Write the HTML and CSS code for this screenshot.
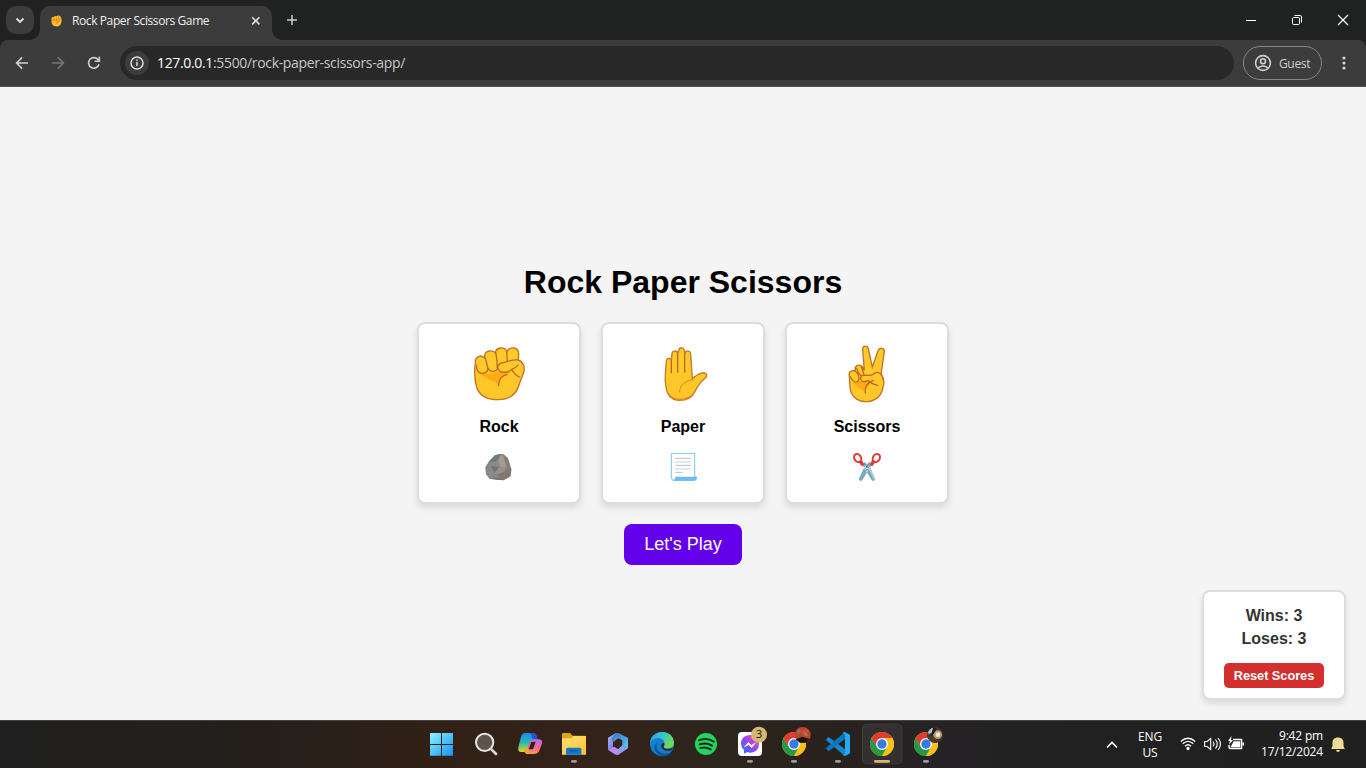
FILE: index.html
```html
<!DOCTYPE html>
<html lang="en">
<head>
<meta charset="utf-8">
<title>Rock Paper Scissors Game</title>
<link rel="stylesheet" href="styles.css">
</head>
<body>
<svg class="defs" width="0" height="0">
  <defs>
    <linearGradient id="skin" x1="0" y1="0" x2="0" y2="1"><stop offset="0" stop-color="#ffc92c"/><stop offset="1" stop-color="#ffc629"/></linearGradient>
    <linearGradient id="win" x1="0" y1="0" x2="1" y2="1"><stop offset="0" stop-color="#8df0ff"/><stop offset="1" stop-color="#1594f5"/></linearGradient>
    <linearGradient id="copA" x1="0" y1="0" x2="0" y2="1"><stop offset="0" stop-color="#128fe8"/><stop offset=".5" stop-color="#28b6b5"/><stop offset="1" stop-color="#e4d51f"/></linearGradient>
    <linearGradient id="copB" x1="0" y1="0" x2="0" y2="1"><stop offset="0" stop-color="#b66af5"/><stop offset=".5" stop-color="#f0629b"/><stop offset="1" stop-color="#ff9b42"/></linearGradient>
    <linearGradient id="fold" x1="0" y1="0" x2="1" y2="1"><stop offset="0" stop-color="#ffe07c"/><stop offset="1" stop-color="#ffc22c"/></linearGradient>
    <linearGradient id="edgeTop" x1="0" y1="0" x2="1" y2=".4"><stop offset="0" stop-color="#2a9fe0"/><stop offset=".5" stop-color="#31c5d1"/><stop offset="1" stop-color="#6edb55"/></linearGradient>
    <linearGradient id="edgeLow" x1="0" y1="0" x2="1" y2="1"><stop offset="0" stop-color="#1386d8"/><stop offset="1" stop-color="#1474cb"/></linearGradient>
    <linearGradient id="mess" x1="0" y1="1" x2="1" y2="0"><stop offset="0" stop-color="#0a83ff"/><stop offset=".5" stop-color="#9b42fb"/><stop offset="1" stop-color="#ff5d83"/></linearGradient>
    <linearGradient id="m365" x1="0" y1="0" x2="1" y2="1"><stop offset="0" stop-color="#a9baf8"/><stop offset="1" stop-color="#6050c8"/></linearGradient>
    <linearGradient id="m365b" x1="0" y1="0" x2="1" y2="1"><stop offset="0" stop-color="#2e6fc5"/><stop offset="1" stop-color="#62c9f5"/></linearGradient>
    <linearGradient id="stone" x1="0" y1="0" x2="1" y2="1"><stop offset="0" stop-color="#74828a"/><stop offset=".5" stop-color="#918b88"/><stop offset="1" stop-color="#746e6d"/></linearGradient>
    <symbol id="fist" viewBox="40 36 158 162">
      <path d="M46 84C44 73 52 64 62 63C67 64 71 66 75 69C72 58 77 50 87 48C96 47 102 49 107 54C106 44 113 40 122 39C131 38 138 42 140 50C143 42 153 37 163 39C173 41 176 47 176 57L175 75C187 79 195 92 192 107C190 119 184 130 179 144C171 177 149 194 115 194C80 195 55 180 49 153C42 126 43 106 46 84Z" fill="url(#skin)" stroke="#c47322" stroke-width="4"/>
      <path d="M57 112C76 121 96 117 112 109L143 112L158 109L141 120C126 124 119 133 116 151C102 135 74 134 57 112Z" fill="#ffac12"/>
      <path d="M49 90C50 107 56 116 67 115C78 115 85 108 83 98C81 84 79 77 75 69M83 98C88 111 106 113 112 102C112 84 110 66 107 53M140 50L142 79M175 75C160 72 145 79 129 83C113 86 110 98 118 107C129 116 146 112 155 103C161 113 171 124 179 126M155 103C162 101 169 97 174 90M116 152C115 134 126 121 141 119" fill="none" stroke="#bd6820" stroke-width="3.800" stroke-linecap="round" stroke-linejoin="round"/>
    </symbol>
    <symbol id="chrome" viewBox="0 0 72 72">
      <circle cx="36" cy="36" r="36" fill="#fbc116"/>
      <path d="M36 18H67.2A36 36 0 0 0 4.8 18L20 45Z" fill="#e33b2e"/>
      <path d="M4.800 18A36 36 0 0 0 36 72L52 45L20 45Z" fill="#279847"/>
      <path d="M36 72A36 36 0 0 0 67.200 18H36L52 45Z" fill="#fbc116"/>
      <circle cx="36" cy="36" r="18" fill="#fff"/><circle cx="36" cy="36" r="14" fill="#327be8"/>
    </symbol>
  </defs>
</svg>

<header class="browser">
  <div class="tabs">
    <div class="tab-search"><svg width="28" height="28" viewBox="0 0 28 28"><path d="M10.500 12.500l3.500 3.400 3.500-3.400" fill="none" stroke="#e4e6e5" stroke-width="1.800"/></svg></div>
    <div class="tab">
      <svg class="favicon" width="11" height="12" viewBox="0 0 11 12"><path d="M.5 3Q1 1.500 3 2Q3.500.5 5.500 1Q8-.2 9.500 1.500Q11 4 10.500 6.500Q10 11.500 5.500 11.500Q.8 11.200.5 7Z" fill="#ffbd26"/><path d="M.8 3V5.500Q2.500 6.500 3 5V2.500M3 5Q4.500 6.500 5.500 5V1.500M7.500 1V3.500M10 4Q6 3 6 5.500Q8 7 9 5.500M5.500 9Q5 7 8 6.500" fill="none" stroke="#c17818" stroke-width=".65"/></svg>
      <span class="tab-title">Rock Paper Scissors Game</span>
      <svg class="tab-close" width="10" height="10" viewBox="0 0 10 10"><path d="M1.200 1.200l7.200 7.200M8.400 1.200L1.200 8.400" stroke="#e7e7e7" stroke-width="1.500"/></svg>
    </div>
    <svg class="new-tab" width="12" height="12" viewBox="0 0 12 12"><path d="M6 1v10M1 6h10" stroke="#cdd0ce" stroke-width="1.500"/></svg>
    <svg class="window-buttons" width="120" height="40" viewBox="0 0 120 40" fill="none" stroke="#fff" stroke-width="1"><path d="M0 20.500h10"/><rect x="46.500" y="17.500" width="7" height="7" rx="1.200"/><path d="M48.500 15.500h5.500q1.500 0 1.500 1.500v5.500"/><path d="M92 15l10 10M102 15L92 25" stroke-width="1.200"/></svg>
  </div>
  <div class="toolbar">
    <svg class="nav-icons" width="120" height="46" viewBox="0 0 120 46" fill="none" stroke-width="1.600"><path d="M28 23H17M22.200 17.400L16.600 23l5.600 5.600" stroke="#d1d1d1"/><path d="M52 23h11M57.800 17.400L63.400 23l-5.600 5.600" stroke="#777"/><path d="M98.300 20A5.300 5.300 0 1 0 99 24.200M99.300 16.800v4.400h-4.700" stroke="#d1d1d1"/></svg>
    <div class="address">
      <span class="site-info"><svg width="24" height="24" viewBox="0 0 24 24" fill="none" stroke="#dedede" stroke-width="1.500"><circle cx="12" cy="12" r="6"/><path d="M12 11v4M12 8.500v1.400"/></svg></span>
      <span class="url"><b>127.0.0.1</b>:5500/rock-paper-scissors-app/</span>
    </div>
    <div class="guest"><svg width="18" height="18" viewBox="0 0 18 18" fill="none" stroke="#cfcfcf" stroke-width="1.600"><circle cx="9" cy="9" r="7.400"/><circle cx="9" cy="7.200" r="2.500"/><path d="M4 14q5-4 10 0"/></svg><span>Guest</span></div>
    <svg class="more" width="6" height="18" viewBox="0 0 6 18" fill="#d0d0d0"><circle cx="3" cy="4" r="1.600"/><circle cx="3" cy="9" r="1.600"/><circle cx="3" cy="14" r="1.600"/></svg>
  </div>
</header>

<main class="game">
  <h1>Rock Paper Scissors</h1>
  <section class="cards">
    <article class="card">
      <svg class="hand" viewBox="-3 0 240 225"><use href="#fist" x="40" y="36" width="158" height="162"/></svg>
      <h2>Rock</h2>
      <svg class="object" viewBox="-3 0 180 120"><path d="M46 67L56 50L75 31L88 27L100 27L113 39L118 52L124 73L122 94L100 106L58 101L48 88Z" fill="url(#stone)"/><path d="M56 50L75 31L90 27L84 44L76 50Z" fill="#6c7a81"/><path d="M84 44L98 27L112 39L119 57L106 67L91 65Z" fill="#a39a94"/><path d="M98 27L113 39L120 70L108 60Z" fill="#827d7a"/><path d="M63 63L88 66L73 85Z" fill="#6f767a"/><path d="M88 66L107 67L102 81L83 88L73 85Z" fill="#9a908b"/><path d="M83 88L104 81L124 73L120 94L100 106Z" fill="#83766f"/><path d="M58 101L80 101L100 106Z" fill="#41586a"/></svg>
    </article>
    <article class="card">
      <svg class="hand" viewBox="-6 0 240 225"><path d="M61 117L64 78C65 68 77 67 79 77L81 56C82 46 97 45 98 56L101 47C103 35 116 36 118 47L120 55C122 44 136 46 137 57L142 130C153 124 160 115 171 114C181 111 190 119 182 128C169 138 158 153 150 169C140 190 122 197 99 196C77 193 66 181 63 157C60 140 60 130 61 117Z" fill="url(#skin)" stroke="#c87922" stroke-width="4"/><path d="M79 77V113M98 57V111M119 55V111" fill="none" stroke="#bd6820" stroke-width="4" stroke-linecap="round"/><path d="M66 165C78 196 118 198 138 180C117 211 73 195 66 165" fill="#e28f18"/><path d="M104 171C104 151 121 138 144 134" fill="none" stroke="#e09118" stroke-width="3.500" stroke-linecap="round"/></svg>
      <h2>Paper</h2>
      <svg class="object" viewBox="-6 0 180 120"><path d="M49 25H119V96H125Q125 106 117 106H56Q49 105 49 97Z" fill="#fff" stroke="#64b7ee" stroke-width="2.500"/><path d="M62 95H126Q125 107 117 107H53Q60 105 62 95Z" fill="#6cbdf1"/><path d="M60 40H108M60 61H108M60 82H83" stroke="#b5c3ca" stroke-width="3"/><path d="M60 51H108M60 72H108" stroke="#dbe1e5" stroke-width="5"/></svg>
    </article>
    <article class="card">
      <svg class="hand" viewBox="-9 0 240 225"><path d="M102 94L98 43C97 31 113 30 115 42L127 96L144 47C149 35 164 39 163 50L153 119C164 131 163 145 159 157C154 185 134 201 105 200C80 199 61 181 60 155L58 123C55 111 64 104 75 108L76 105C73 93 85 86 96 94L103 107Z" fill="url(#skin)" stroke="#c47322" stroke-width="4"/><path d="M70 141L96 138L116 139L139 134C120 143 108 154 106 173C96 160 78 159 70 141Z" fill="#ffac12"/><path d="M75 108C84 112 91 131 84 139C75 147 65 134 61 125M80 100C85 119 96 128 102 118L94 95M96 121C88 130 93 142 104 140C110 139 112 137 116 137C122 146 134 149 143 151M103 121C110 120 121 125 132 116C143 107 158 115 159 134M106 174C103 160 110 143 129 137" fill="none" stroke="#bd6820" stroke-width="3.800" stroke-linecap="round"/></svg>
      <h2>Scissors</h2>
      <svg class="object" viewBox="-12 0 180 120"><g transform="translate(-558 0)"><path d="M619 55L630 52L645 68L661 103L655 109L650 105ZM653 55L642 52L627 68L611 103L616 109L622 105Z" fill="#7ba9b8"/><path d="M640 69L657 105L661 103L648 70Z" fill="#acd2df"/><path d="M619 52L637 60L631 71L644 80M653 52L637 60L642 71L628 80" fill="none" stroke="#6e9cad" stroke-width="3"/><circle cx="636" cy="66" r="3" fill="#486e7e"/><g fill="#fff" stroke="#e3392f" stroke-width="6"><ellipse cx="608" cy="39" rx="10" ry="13" transform="rotate(-32 608 39)"/><ellipse cx="664" cy="39" rx="10" ry="13" transform="rotate(32 664 39)"/></g><path d="M613 54L621 45L627 60L620 64ZM659 54L651 45L645 60L652 64Z" fill="#e3392f"/></g></svg>
    </article>
  </section>
  <button class="play">Let's Play</button>
  <aside class="scores"><p>Wins: 3</p><p>Loses: 3</p><button>Reset Scores</button></aside>
</main>

<footer class="taskbar">
  <nav class="apps">
    <svg viewBox="0 0 132 144"><path d="M33 39H66V72H33ZM69 39H102V72H69ZM33 75H66V107H33ZM69 75H102V107H69Z" fill="url(#win)"/></svg>
    <svg viewBox="0 0 132 144"><circle cx="65" cy="67" r="26" fill="#5e544b" stroke="#e5e4e3" stroke-width="6"/><path d="M83 86L99 102" stroke="#d8d8d8" stroke-width="8" stroke-linecap="round"/></svg>
    <svg viewBox="0 0 132 144"><path d="M54 39H79Q86 39 89 50L92 59H78Q71 59 68 69L61 91Q59 96 53 96H43Q31 96 34 82L42 51Q45 39 54 39Z" fill="url(#copA)"/><path d="M68 39H79Q87 39 92 58H77L72 42Z" fill="#2353d7"/><path d="M78 58H94Q108 58 105 71L96 94Q92 102 83 102H61Q55 102 51 93L49 90Q58 92 61 84L68 66Q71 58 78 58Z" fill="url(#copB)"/><path d="M73 66L65 88H78L86 65Z" fill="#2d231b"/><path d="M49 89Q58 92 61 84L64 76Q62 96 70 102H61Q54 101 49 89Z" fill="#f1a638"/></svg>
    <svg viewBox="0 0 132 144"><path d="M33 43Q33 39 37 39H57L65 47H100Q105 47 105 52V103H33Z" fill="#e2a50e"/><path d="M33 55H61L67 48H105V104H33Z" fill="url(#fold)"/><path d="M45 104V88Q45 83 50 83H86Q91 83 91 88V104Z" fill="#1179cb"/><path d="M55 92H81" stroke="#075b9e" stroke-width="4"/><rect class="active-mark" x="60" y="120" width="18" height="8" rx="4"/></svg>
    <svg viewBox="0 0 132 144"><path d="M63 39L39 53V89L54 98V66L79 47Z" fill="url(#m365)"/><path d="M63 39H71L99 54V85L82 76V61L63 52L54 66L48 57Z" fill="url(#m365b)"/><path d="M40 90L58 80L70 88L82 76L99 85L69 105Q63 106 58 102Z" fill="#bd8bea"/><path d="M70 88L82 76L97 84L73 99Z" fill="#80a1ee"/></svg>
    <svg viewBox="0 0 132 144"><circle cx="69" cy="72" r="36" fill="url(#edgeLow)"/><path d="M33 71C34 48 51 36 70 36C93 36 106 53 105 70C103 86 86 89 76 83C69 79 77 76 76 68C74 56 58 51 46 56C39 59 35 64 33 71Z" fill="url(#edgeTop)"/><path d="M57 67C48 77 53 94 69 99C80 103 91 101 98 96C88 111 65 110 56 101C43 91 43 73 57 67Z" fill="#0753a3"/><path d="M75 78Q72 81 75 84Q86 91 102 83L98 90Q86 95 75 90Q66 85 66 76Q67 70 75 68Q78 73 75 78Z" fill="#31251b"/></svg>
    <svg viewBox="0 0 132 144"><circle cx="69" cy="72" r="33" fill="#1ed760"/><path d="M48 61Q72 52 92 65M50 73Q71 66 87 77M52 84Q69 79 83 88" fill="none" stroke="#14291b" stroke-width="6" stroke-linecap="round"/></svg>
    <svg viewBox="0 0 132 144"><rect x="33" y="36" width="72" height="72" rx="12" fill="#fff"/><path d="M69 45C52 45 42 56 42 71Q42 82 51 91V101L61 96Q65 98 69 98C86 98 96 87 96 71S86 45 69 45Z" fill="url(#mess)"/><path d="M53 80L64 67L73 76L85 69L74 83L65 74Z" fill="#fff" stroke="#fff" stroke-width="2"/><circle cx="96" cy="44" r="24" fill="#d6b875"/><text x="96" y="55" class="badge-number">3</text><rect class="active-mark" x="60" y="120" width="18" height="8" rx="4"/></svg>
    <svg viewBox="0 0 132 144"><use href="#chrome" x="33" y="36" width="72" height="72"/><circle cx="95" cy="45" r="24" fill="#b8442f"/><path d="M75 37L85 24L92 34L105 24L114 38L102 45L88 37Z" fill="#d94532"/><path d="M75 58L94 50L115 57L104 68L87 68Z" fill="#17130f"/><path d="M78 34L89 28L84 46Z" fill="#788253"/><path d="M101 34L112 48L98 45Z" fill="#8b8f5b"/><rect class="active-mark" x="60" y="120" width="18" height="8" rx="4"/></svg>
    <svg viewBox="0 0 132 144"><path d="M35 56L41 51L90 88V107L83 103L34 61Q32 59 35 56Z" fill="#1686cf"/><path d="M35 88L41 94L90 57V36L83 42L34 83Q32 86 35 88Z" fill="#0878bd"/><path d="M86 36Q90 35 93 38L105 44V100L92 107Q87 109 84 104Q90 105 90 99V45Q90 39 83 42Z" fill="#27a9f2"/><rect class="active-mark" x="60" y="120" width="18" height="8" rx="4"/></svg>
    <svg viewBox="0 0 132 144"><rect x="10.500" y="12.500" width="118" height="119" rx="12" fill="#343030" stroke="#403c3b" stroke-width="3"/><use href="#chrome" x="33" y="36" width="72" height="72"/><rect x="45" y="120" width="48" height="8" rx="4" fill="#d5b773"/></svg>
    <svg viewBox="0 0 132 144"><use href="#chrome" x="33" y="36" width="72" height="72"/><circle cx="96" cy="45" r="24" fill="#4b3628"/><path d="M75 37Q80 25 91 23L88 37L77 43Z" fill="#a9c7d9"/><circle cx="104" cy="44" r="13" fill="#b49b78"/><circle cx="105" cy="44" r="7" fill="#efe5d3"/><path d="M91 22L101 25L94 39L83 49Z" fill="#211b1b"/><rect class="active-mark" x="60" y="120" width="18" height="8" rx="4"/></svg>
  </nav>
  <div class="tray">
    <svg class="tray-arrow" width="12" height="8" viewBox="0 0 12 8"><path d="M1 6.500l5-5 5 5" fill="none" stroke="#fff" stroke-width="1.600"/></svg>
    <div class="language">ENG<br>US</div>
    <svg class="status" width="66" height="18" viewBox="0 0 66 18" fill="none" stroke="#fff" stroke-width="1.300"><path d="M.8 6.500q7.200-6.500 14.400 0M2.800 8.800q5.200-4.800 10.400 0M5 11.200q3-2.800 6 0"/><circle cx="8" cy="13.500" r="1" fill="#fff"/><path d="M24.700 6.500h2.500l3.500-3v11l-3.500-3h-2.500zM33 6.500q2 2.500 0 5M35.500 4.500q3.500 4.500 0 9M38 3q5 6 0 12" stroke-width="1.100"/><path d="M53 4.500h8.500v9H50.500q-1.500 0-1.500-2v-1.500M63.300 7.500v3" stroke-width="1.500"/><path d="M54 7h5.500v4.500h-8z" fill="#fff"/><path d="M51.500 1l-3.500 5h2l-1 4 4-5h-2z" fill="#fff" stroke="none"/></svg>
    <div class="clock"><span>9:42 pm</span><span>17/12/2024</span></div>
    <svg class="bell" width="14" height="16" viewBox="0 0 14 16"><path d="M7 .5C3.500.5 1.500 2.700 1.500 5.500V9L.2 12h13.600L12.500 9V5.500C12.500 2.700 10.500.5 7 .5ZM5 13h4q-.5 2-2 2t-2-2Z" fill="#efda96"/></svg>
  </div>
</footer>
</body>
</html>
```
FILE: styles.css
```css
* { box-sizing: border-box; }
body { margin: 0; height: 768px; overflow: hidden; display: flex; flex-direction: column; background: #f4f4f4; font-family: "Liberation Sans", Arial, sans-serif; }
svg { display: block; flex: none; }
.defs { position: absolute; }
.browser { flex: none; height: 87px; background: #202221; font-family: "Open Sans", "Noto Sans", sans-serif; }
.tabs { height: 40px; display: flex; align-items: center; padding-left: 6px; }
.tab-search { width: 28px; height: 28px; border-radius: 10px; background: #3c3c3c; }
.tab { position: relative; width: 232px; height: 34px; margin: 6px 0 0 6px; padding: 0 11px 5px; display: flex; align-items: center; background: #3c3c3c; border-radius: 10px 10px 0 0; }
.tab::before, .tab::after { content: ""; position: absolute; bottom: 0; width: 10px; height: 10px; }
.tab::before { left: -10px; background: radial-gradient(circle at 0 0, transparent 9.5px, #3c3c3c 10px); }
.tab::after { right: -10px; background: radial-gradient(circle at 100% 0, transparent 9.5px, #3c3c3c 10px); }
.tab-title { margin-left: 10px; width: 145px; font-size: 12px; letter-spacing: -.4px; color: #eee; white-space: nowrap; }
.tab-close { margin-left: auto; }
.new-tab { margin-left: 14px; }
.window-buttons { margin-left: auto; }
.toolbar { height: 47px; display: flex; align-items: center; background: #3c3c3c; border-bottom: 1px solid #4b4b4b; border-radius: 8px 8px 0 0; }
.address { width: 1114px; height: 34px; padding-left: 5px; display: flex; align-items: center; border-radius: 17px; background: #282828; }
.site-info { width: 24px; height: 24px; border-radius: 50%; background: #3c3c3c; }
.url { margin: 0 0 2px 8px; font-size: 14px; letter-spacing: -.34px; color: #c7c7c7; white-space: nowrap; }
.url b { color: #fff; font-weight: 400; }
.guest { width: 79px; height: 34px; margin-left: 9px; padding-left: 10px; display: flex; align-items: center; gap: 7px; border: 1px solid #878787; border-radius: 17px; color: #cfcfcf; font-size: 12px; letter-spacing: -.35px; }
.more { margin-left: 19px; }

.game { position: relative; flex: none; height: 633px; padding-top: 177px; display: flex; flex-direction: column; align-items: center; }
h1 { margin: 0 0 21px; font-size: 32px; line-height: 37px; color: #000; }
.cards { display: flex; gap: 20px; }
.card { width: 164px; height: 182px; padding-top: 11px; display: flex; flex-direction: column; align-items: center; background: #fff; border: 2px solid #ddd; border-radius: 8px; box-shadow: 0 4px 6px rgba(0,0,0,.1); }
.hand { width: 80px; height: 75px; }
.card h2 { margin: 8px 0 9px; font-size: 16px; line-height: 18px; }
.object { width: 60px; height: 40px; }
.play { width: 118px; height: 41px; margin-top: 20px; padding: 0; border: 0; border-radius: 8px; background: #6200ea; color: #fff; font: 18px "Liberation Sans", Arial, sans-serif; }
.scores { position: absolute; right: 20px; bottom: 20px; width: 144px; height: 110px; padding: 12px 20px 0; border: 2px solid #ddd; border-radius: 8px; background: #fff; box-shadow: 0 4px 6px rgba(0,0,0,.1); color: #333; text-align: center; }
.scores p { margin: 0; font-size: 16px; font-weight: 700; line-height: 23px; }
.scores button { display: block; width: 100px; height: 25px; margin-top: 13px; padding: 0; border: 0; border-radius: 5px; background: #d32f2f; color: #fff; font: 700 12.8px "Liberation Sans", Arial, sans-serif; letter-spacing: -.05px; }

.taskbar { flex: none; height: 48px; display: flex; padding-left: 419px; border-top: 1px solid #454240; background: linear-gradient(90deg, #202020 0, #241f1b 19%, #302016 31%, #33231a 46%, #2b261d 53%, #29221d 60%, #252325 68%, #212121 80%, #202020); color: #fff; font-family: "Open Sans", "Noto Sans", sans-serif; font-size: 12px; }
.apps { display: flex; margin-top: -1px; }
.apps svg { width: 44px; height: 48px; }
.active-mark { fill: #9c9792; }
.badge-number { fill: #17120d; font-size: 34px; text-anchor: middle; }
.tray { flex: 1; display: flex; align-items: center; padding-right: 21px; }
.tray-arrow { margin-left: 159px; }
.language { width: 28px; margin-left: 18px; text-align: center; line-height: 16px; letter-spacing: -.2px; }
.status { margin: 0 0 2px 16px; }
.clock { width: 70px; margin: 0 0 2px 7px; display: flex; flex-direction: column; align-items: flex-end; line-height: 16px; letter-spacing: -.18px; }
.bell { margin-left: auto; }
```
